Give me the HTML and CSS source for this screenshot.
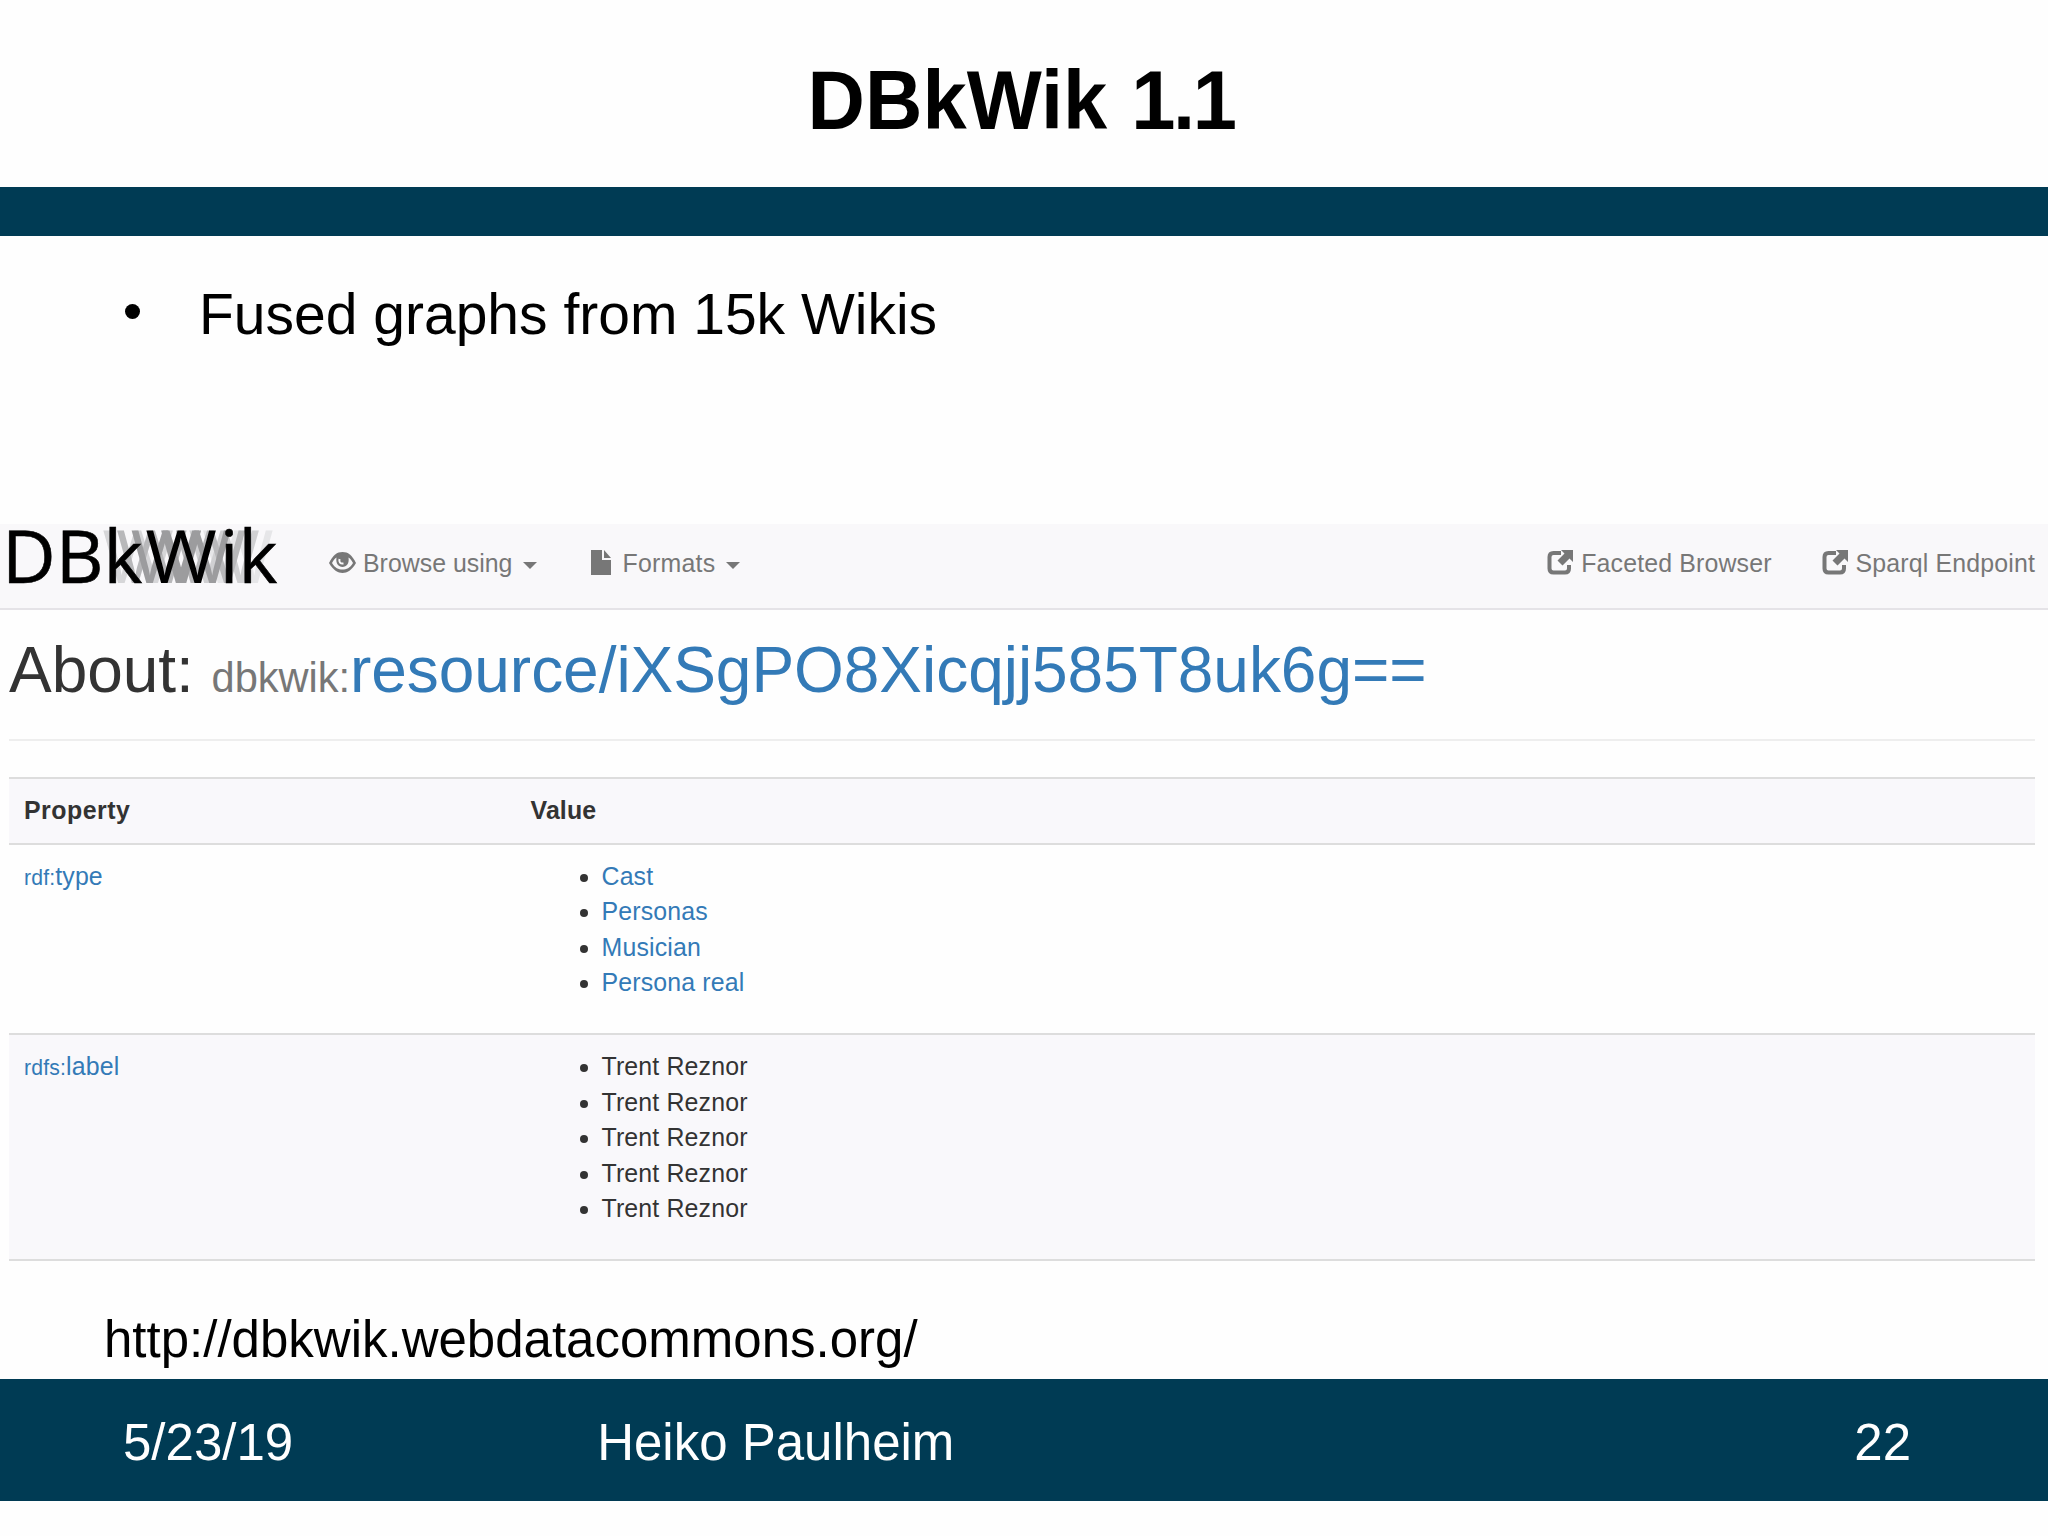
FILE: index.html
```
<!DOCTYPE html>
<html lang="en">

<head>
  <meta charset="UTF-8">
  <meta name="viewport" content="width=device-width, initial-scale=1.0">
  <title>DBkWik 1.1</title>
  <link rel="stylesheet" href="styles.css">
</head>

<body>
  <header class="title">
    <h1>DBkWik <span class="version">1.1</span></h1>
  </header>
  <div class="bar"></div>
  <ul class="points">
    <li><span class="dot"></span><span class="point">Fused graphs from 15k Wikis</span></li>
  </ul>

  <main class="browser">
    <nav class="navbar">
      <div class="logo"><span>DBk</span><span class="ghosted">W</span><span>ik</span></div>
      <a class="item browse">
        <svg class="icon" width="27" height="24" viewBox="0 0 27 24">
          <path d="M0 12C4 4 8 1 13.500 1S23 4 27 12C23 19 18 22 13.500 22S4 19 0 12z" fill="#777" />
          <path d="M3 12C5 8.500 6 7.500 7.500 6.500C6.500 12.500 9.500 16 13.500 16S20.500 12.500 19.500 6.500C21 7.500 22 8.500 24 12C21 17 17.500 18.500 13.500 18.500S6 17 3 12z" fill="#f9f8fa" />
          <path d="M10.500 8Q9.500 13 14.500 12.500" fill="none" stroke="#f9f8fa" stroke-width="2" />
        </svg>
        <span class="browse-text">Browse using</span>
        <span class="caret"></span>
      </a>
      <a class="item formats">
        <svg class="icon" width="20" height="26" viewBox="0 0 20 26">
          <path d="M0 0h11v10h9v15H0zM13 0l7 8h-7z" fill="#777" />
        </svg>
        <span class="formats-text">Formats</span>
        <span class="caret"></span>
      </a>
      <a class="item faceted">
        <svg class="icon" width="27" height="26" viewBox="0 0 27 26">
          <path d="M14 3H6.500Q2.500 3 2.500 7V18.500Q2.500 22.500 6.500 22.500H18Q22 22.500 22 18.500V15" fill="none" stroke="#777" stroke-width="4" />
          <path d="M14 0h12v12l-3.500-3.500-7 7-5-5 7-7z" fill="#777" />
        </svg>
        <span class="faceted-text">Faceted Browser</span>
      </a>
      <a class="item sparql">
        <svg class="icon" width="27" height="26" viewBox="0 0 27 26">
          <path d="M14 3H6.500Q2.500 3 2.500 7V18.500Q2.500 22.500 6.500 22.500H18Q22 22.500 22 18.500V15" fill="none" stroke="#777" stroke-width="4" />
          <path d="M14 0h12v12l-3.500-3.500-7 7-5-5 7-7z" fill="#777" />
        </svg>
        <span class="sparql-text">Sparql Endpoint</span>
      </a>
    </nav>

    <h2 class="about">About: <small>dbkwik:</small><a>resource/iXSgPO8Xicqjj585T8uk6g==</a></h2>

    <table class="facts">
      <thead>
        <tr>
          <th>Property</th>
          <th>Value</th>
        </tr>
      </thead>
      <tbody>
        <tr>
          <td><a><small>rdf:</small>type</a></td>
          <td>
            <ul>
              <li><a>Cast</a></li>
              <li><a>Personas</a></li>
              <li><a>Musician</a></li>
              <li><a>Persona real</a></li>
            </ul>
          </td>
        </tr>
        <tr class="odd">
          <td><a><small>rdfs:</small>label</a></td>
          <td>
            <ul>
              <li>Trent Reznor</li>
              <li>Trent Reznor</li>
              <li>Trent Reznor</li>
              <li>Trent Reznor</li>
              <li>Trent Reznor</li>
            </ul>
          </td>
        </tr>
      </tbody>
    </table>
  </main>

  <p class="url">http://dbkwik.webdatacommons.org/</p>
  <footer class="footer">
    <span class="date">5/23/19</span>
    <span class="author">Heiko Paulheim</span>
    <span class="page">22</span>
  </footer>
</body>

</html>
```
FILE: styles.css
```
* {
  box-sizing: border-box;
}

body {
  margin: 0;
  width: 2048px;
  height: 1536px;
  overflow: hidden;
  display: flex;
  flex-direction: column;
  background-color: #fefefe;
  color: #000;
  font-family: 'Liberation Sans', Arial, sans-serif;
}

h1,
h2,
p,
ul {
  margin: 0;
  padding: 0;
}

.title {
  height: 187px;
  padding-top: 55px;
  text-align: center;
}

.title h1 {
  font-size: 79.5px;
  line-height: 92px;
  padding-right: 6px;
  word-spacing: 2px;
  transform: scaleY(1.04);
}

.version {
  letter-spacing: -2.5px;
}

.bar {
  height: 49px;
  background-color: #003b54;
}

.points {
  height: 288px;
  padding: 45px 0 0 125px;
  list-style: none;
  font-size: 57px;
  line-height: 66px;
}

.points li {
  display: flex;
  align-items: center;
}

.dot {
  width: 15px;
  height: 15px;
  margin-bottom: 6px;
  border-radius: 50%;
  background-color: #000;
}

.point {
  margin-left: 59px;
}

.browser {
  height: 766px;
  color: #333;
  font-size: 24.9px;
  line-height: 35.6px;
}

.browser a {
  color: #337ab7;
}

.navbar {
  height: 86px;
  display: flex;
  border-bottom: 2px solid #e5e3e7;
  background-color: #f9f8fa;
}

.browser .item {
  display: flex;
  align-items: center;
  height: 80px;
  color: #777;
}

.logo {
  width: 290px;
  height: 84px;
  display: flex;
  padding-left: 2px;
  color: #000;
  font-family: 'Open Sans', 'Noto Sans', sans-serif;
  font-size: 74px;
  line-height: 61px;
}

.logo span {
  position: relative;
  z-index: 1;
  -webkit-text-stroke: 0.6px #000;
}

/* copies of the W fade out to both sides */
.logo .ghosted {
  z-index: 0;
  margin: 0 4px 0 5px;
  transform: scaleX(1.05);
  -webkit-text-stroke: 0;
  text-shadow:
    -14px 0 #9c9c9e,
    14px 0 #9c9c9e,
    -28px 0 #b8b8ba,
    28px 0 #b8b8ba,
    -41px 0 #d6d6d8,
    41px 0 #d0d0d2,
    54px 0 #e6e6e8;
}

.icon {
  margin: -3px 7px 0 0;
}

.browse {
  margin-left: 39px;
}

.formats {
  margin-left: 54px;
}

.formats .icon {
  margin-right: 11px;
}

.formats-text {
  letter-spacing: 0.25px;
}

.faceted-text,
.sparql-text {
  letter-spacing: 0.15px;
}

.faceted {
  margin-left: auto;
}

.sparql {
  margin: 0 13px 0 50px;
}

.caret {
  margin: 3px 0 0 11px;
  border: 7px solid transparent;
  border-top-color: #777;
  border-bottom: 0;
}

.about {
  height: 131px;
  margin: 0 13px 0 9px;
  padding-top: 25px;
  border-bottom: 2px solid #eee;
  font-size: 64px;
  font-weight: normal;
  line-height: 70px;
  letter-spacing: -0.04px;
}

.about small {
  color: #777;
  font-size: 41.6px;
}

.facts {
  width: 2026px;
  margin: 36px 0 0 9px;
  table-layout: fixed;
  border-collapse: collapse;
  border-bottom: 2px solid #ddd;
  letter-spacing: 0.15px;
}

.facts th,
.facts td {
  padding: 14px 14px 14px 15px;
  border-top: 2px solid #ddd;
  text-align: left;
  vertical-align: top;
}

.facts th:first-child {
  width: 25%;
  letter-spacing: 0.5px;
}

.facts thead,
.odd {
  background-color: #f9f8fb;
}

.facts small {
  font-size: 21.2px;
}

.facts ul {
  margin-bottom: 18px;
  padding-left: 71px;
}

.url {
  height: 89px;
  padding: 21px 0 0 104px;
  font-size: 51px;
  line-height: 58px;
}

.footer {
  height: 122px;
  display: flex;
  padding: 35px 137px 0 123px;
  background-color: #003b54;
  color: #fff;
  font-size: 51px;
  line-height: 58px;
}

.author {
  margin-left: 304px;
}

.page {
  margin-left: auto;
}
```
